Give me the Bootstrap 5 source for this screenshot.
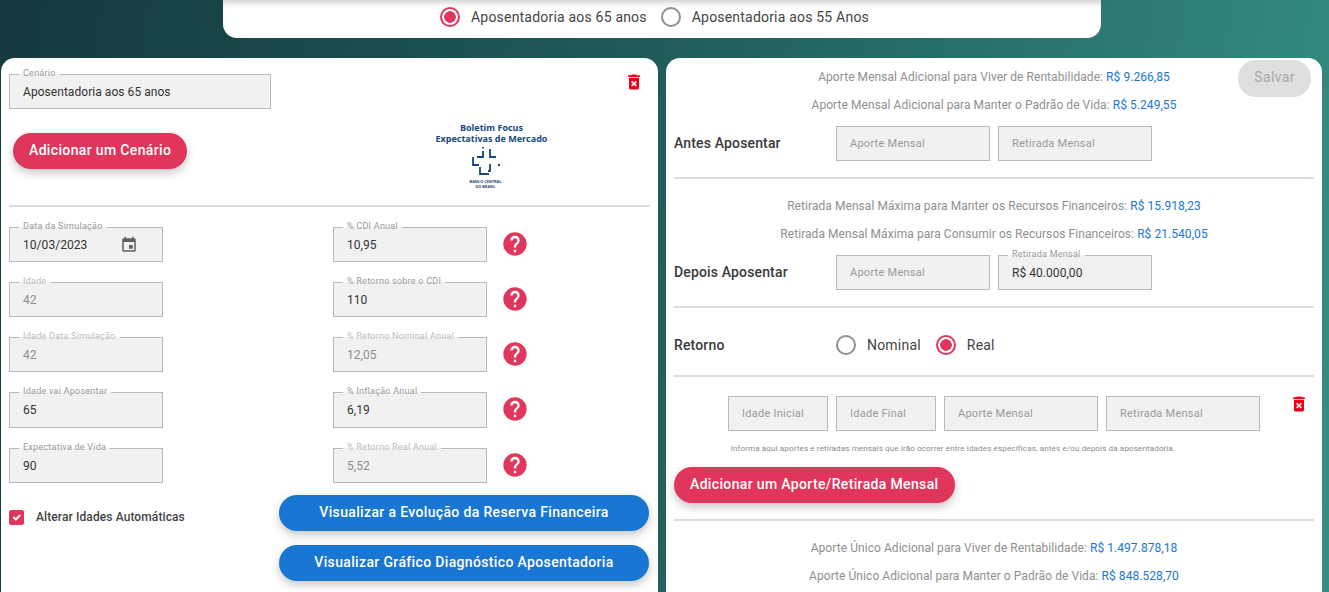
<!DOCTYPE html>
<html lang="pt-br">
<head>
  <meta charset="UTF-8">
  <meta name="viewport" content="width=device-width, initial-scale=1">
  <title>Aposentadoria</title>
  <link href="https://cdn.jsdelivr.net/npm/bootstrap@5.3.3/dist/css/bootstrap.min.css" rel="stylesheet">
  <style>
    html, body { height: 592px; overflow: hidden; }
    body {
      font-family: Roboto, "Liberation Sans", sans-serif;
      font-size: 12px;
      color: #333;
      background: linear-gradient(100deg, #14393e 0%, #1f5a5a 45%, #358f82 100%);
    }
    .faixa-topo {
      width: 878px; height: 38px; margin-left: 223px; padding-bottom: 4px;
      background: #fff;
      border-radius: 0 0 14px 14px;
      box-shadow: inset 0 7px 7px -5px rgba(0,0,0,.22);
    }
    .area-paineis { margin-top: 20px; padding-left: 1px; gap: 8px; }
    .painel {
      width: 657px; height: 560px; flex: none;
      background: #fff;
      border-radius: 14px 14px 0 0;
      position: relative;
    }
    .painel-dir { width: 656px; padding: 10px 8px 0 8px; }
    .painel-esq { padding: 16px 8px 0 8px; }

    .campo {
      position: relative; flex: none;
      width: 154px; height: 35px;
      background: #f1f1f1;
      border: 1px solid #b9b9b9;
      padding-left: 13px;
      display: flex; align-items: center;
      font-size: 12px; letter-spacing: .05px; color: #333;
    }
    .campo.largo { width: 262px; }
    .campo.curto { width: 100px; }
    .campo.alto { height: 36px; }
    .campo.inativo { color: #8d8d8d; }
    .campo.vazio { color: #9a9a9a; font-size: 11px; letter-spacing: .25px; padding-top: 1px; }
    .campo-rotulo {
      position: absolute; top: -7px; left: 9px;
      padding: 0 4px; line-height: 11px;
      font-size: 9px; letter-spacing: .25px; color: #9a9a9a;
      background: linear-gradient(#fff 6px, #f1f1f1 6px);
    }
    .inativo .campo-rotulo { color: #bcbcbc; }
    .icone-data { position: absolute; left: 110px; top: 8px; width: 18px; height: 18px; fill: #5f5f5f; }
    .icone-ajuda { width: 28px; height: 28px; fill: #e0365b; margin: 3px 0 0 14px; flex: none; }
    .icone-lixo { width: 20px; height: 20px; fill: #f00018; flex: none; }

    .botao-pill {
      display: inline-block; height: 36px;
      padding: 0 16px 2px; border: 0; border-radius: 18px;
      font-family: inherit; font-size: 14px; font-weight: 500; letter-spacing: .35px;
      color: #fff; text-align: center;
      box-shadow: 0 4px 10px rgba(0,0,0,.22);
    }
    .botao-rosa { background: #e0365b; }
    .botao-azul { background: #1976d2; width: 370px; display: block; }
    .botao-salvar {
      position: absolute; top: 2px; right: 11px;
      width: 73px; height: 37px; padding: 0 0 2px;
      background: #dfdfdf; color: #a9a9a9; box-shadow: none;
      font-weight: 400;
    }
    .botao-cenario { margin: 24px 0 0 4px; }
    .botao-aporte { display: block; }

    .divisor { height: 2px; background: #dcdcdc; }
    .divisor-esq { margin-bottom: 20px; }
    .div-a, .div-b, .div-c { margin-top: 16px; }

    .topo-cenario { height: 131px; }
    .lixo-cenario { margin: -2px 0 0 76px; }
    .logo-focus {
      width: 113px; margin-left: 164px; margin-top: 48px; text-align: center;
      color: #17477c; font-weight: 700; font-size: 9px; line-height: 11px;
      font-family: "Open Sans", sans-serif; white-space: nowrap;
    }
    .logo-marca { padding-right: 12px; }
    .logo-marca svg { display: block; margin: 2px auto 0; }
    .logo-miudo { font-size: 3.8px; line-height: 5px; margin-top: 2px; color: #26486e; }

    .coluna-esq { width: 324px; flex: none; }
    .linha-campos { height: 55px; }
    .linha-alta { height: 56px; }
    .rodape-esq { margin-top: -8px; }
    .checa-idades { width: 270px; height: 36px; margin-top: 4px; }
    .checa-texto { margin-left: 12px; font-weight: 500; color: #444; letter-spacing: .1px; }
    .botoes-azuis { gap: 14px; }

    .secao-rotulo { width: 154px; flex: none; font-size: 14px; font-weight: 500; letter-spacing: .15px; color: #3a3a3a; }
    .secao-larga { width: 162px; }
    .info { text-align: center; line-height: 18px; color: #8f8f8f; height: 28px; white-space: nowrap; letter-spacing: .06px; }
    .info b { font-weight: 400; color: #1976d2; }
    .info-depois { margin-top: 18px; }
    .info-unico { margin-top: 18px; }
    .linha-aporte { height: 35px; margin-top: 2px; }
    .linha-aporte2 { height: 35px; margin-top: 2px; }
    .linha-retorno { height: 67px; padding-top: 7px; }
    .linha-idades { margin: 19px 0 0 54px; }
    .lixo-idades { margin: -2px 0 0 21px; }
    .nota {
      margin-top: 12px; height: 24px; padding-right: 82px;
      font-size: 8px; color: #8a8a8a; text-align: center; letter-spacing: .15px;
    }

    .form-check-input[type=radio] { width: 20px; height: 20px; margin: 0; border: 2px solid #8e8e96; flex: none; }
    .form-check-input[type=radio]:checked {
      border-color: #e0365b; background-color: #fff;
      background-image: radial-gradient(circle, #e0365b 0, #e0365b 5.5px, transparent 6px);
    }
    .form-check-input[type=checkbox] { width: 15px; height: 15px; margin: 0; border-radius: 2px; flex: none; }
    .form-check-input[type=checkbox]:checked { background-color: #e0365b; border-color: #e0365b; }
    .rotulo-radio { font-size: 14px; letter-spacing: .2px; color: #444; margin-left: 11px; }
    .form-check-input.marca-a[type=radio] { margin-left: 217px; }
    .form-check-input.marca-b[type=radio] { margin-left: 14px; }
    .form-check-input.marca-real[type=radio] { margin-left: 15px; }
  </style>
</head>
<body>

  <div class="faixa-topo d-flex align-items-center">
    <input class="form-check-input marca-a" type="radio" name="idade" checked>
    <span class="rotulo-radio">Aposentadoria aos 65 anos</span>
    <input class="form-check-input marca-b" type="radio" name="idade">
    <span class="rotulo-radio">Aposentadoria aos 55 Anos</span>
  </div>

  <div class="area-paineis d-flex">
    <div class="painel painel-esq">
      <div class="d-flex topo-cenario">
        <div>
          <div class="campo largo"><span class="campo-rotulo">Cenário</span>Aposentadoria aos 65 anos</div>
          <button class="botao-pill botao-rosa botao-cenario">Adicionar um Cenário</button>
        </div>
        <div class="logo-focus">
          Boletim Focus<br>Expectativas de Mercado
          <div class="logo-marca">
            <svg width="30" height="31" viewBox="0 0 30 31" fill="none" stroke="#17477c" stroke-width="1.8">
              <path d="M12 1v1.5M12 5v6H6M19 3v8h6M2 11v8h6M9 21v7h9M19 18v7h-2M27 19h2"/>
            </svg>
            <div class="logo-miudo">BANCO CENTRAL<br>DO BRASIL</div>
          </div>
        </div>
        <svg class="icone-lixo lixo-cenario" viewBox="0 0 24 24"><path d="M6 19c0 1.1.9 2 2 2h8c1.1 0 2-.9 2-2V7H6v12zm2.46-7.12l1.41-1.41L12 12.59l2.12-2.12 1.41 1.41L13.41 14l2.12 2.12-1.41 1.41L12 15.41l-2.12 2.12-1.41-1.41L10.59 14l-2.13-2.12zM15.5 4l-1-1h-5l-1 1H5v2h14V4z"/></svg>
      </div>

      <div class="divisor divisor-esq"></div>

      <div id="camposEsq"></div>

      <div class="d-flex rodape-esq">
        <div class="d-flex align-items-center checa-idades">
          <input class="form-check-input" type="checkbox" checked>
          <span class="checa-texto">Alterar Idades Automáticas</span>
        </div>
        <div class="d-flex flex-column botoes-azuis">
          <button class="botao-pill botao-azul">Visualizar a Evolução da Reserva Financeira</button>
          <button class="botao-pill botao-azul">Visualizar Gráfico Diagnóstico Aposentadoria</button>
        </div>
      </div>
    </div>

    <div class="painel painel-dir">
      <button class="botao-pill botao-salvar">Salvar</button>

      <div class="info">Aporte Mensal Adicional para Viver de Rentabilidade: <b>R$ 9.266,85</b></div>
      <div class="info">Aporte Mensal Adicional para Manter o Padrão de Vida: <b>R$ 5.249,55</b></div>
      <div class="d-flex align-items-center gap-2 linha-aporte">
        <div class="secao-rotulo">Antes Aposentar</div>
        <div class="campo vazio">Aporte Mensal</div>
        <div class="campo vazio">Retirada Mensal</div>
      </div>
      <div class="divisor div-a"></div>

      <div class="info info-depois">Retirada Mensal Máxima para Manter os Recursos Financeiros: <b>R$ 15.918,23</b></div>
      <div class="info">Retirada Mensal Máxima para Consumir os Recursos Financeiros: <b>R$ 21.540,05</b></div>
      <div class="d-flex align-items-center gap-2 linha-aporte2">
        <div class="secao-rotulo">Depois Aposentar</div>
        <div class="campo vazio">Aporte Mensal</div>
        <div class="campo"><span class="campo-rotulo">Retirada Mensal</span>R$ 40.000,00</div>
      </div>
      <div class="divisor div-b"></div>

      <div class="d-flex align-items-center linha-retorno">
        <div class="secao-rotulo secao-larga">Retorno</div>
        <input class="form-check-input" type="radio" name="retorno">
        <span class="rotulo-radio">Nominal</span>
        <input class="form-check-input marca-real" type="radio" name="retorno" checked>
        <span class="rotulo-radio">Real</span>
      </div>
      <div class="divisor"></div>

      <div class="d-flex gap-2 linha-idades">
        <div class="campo vazio curto">Idade Inicial</div>
        <div class="campo vazio curto">Idade Final</div>
        <div class="campo vazio">Aporte Mensal</div>
        <div class="campo vazio">Retirada Mensal</div>
        <svg class="icone-lixo lixo-idades" viewBox="0 0 24 24"><path d="M6 19c0 1.1.9 2 2 2h8c1.1 0 2-.9 2-2V7H6v12zm2.46-7.12l1.41-1.41L12 12.59l2.12-2.12 1.41 1.41L13.41 14l2.12 2.12-1.41 1.41L12 15.41l-2.12 2.12-1.41-1.41L10.59 14l-2.13-2.12zM15.5 4l-1-1h-5l-1 1H5v2h14V4z"/></svg>
      </div>
      <div class="nota">Informa aqui aportes e retiradas mensais que irão ocorrer entre idades específicas, antes e/ou depois da aposentadoria.</div>
      <button class="botao-pill botao-rosa botao-aporte">Adicionar um Aporte/Retirada Mensal</button>
      <div class="divisor div-c"></div>

      <div class="info info-unico">Aporte Único Adicional para Viver de Rentabilidade: <b>R$ 1.497.878,18</b></div>
      <div class="info">Aporte Único Adicional para Manter o Padrão de Vida: <b>R$ 848.528,70</b></div>
    </div>
  </div>

  <script>
    const ajuda = '<svg class="icone-ajuda" viewBox="0 0 24 24"><path d="M12 2C6.48 2 2 6.48 2 12s4.48 10 10 10 10-4.48 10-10S17.52 2 12 2zm1 17h-2v-2h2v2zm2.07-7.75l-.9.92C13.45 12.9 13 13.5 13 15h-2v-.5c0-1.1.45-2.1 1.17-2.83l1.24-1.26c.37-.36.59-.86.59-1.41 0-1.1-.9-2-2-2s-2 .9-2 2H8c0-2.21 1.79-4 4-4s4 1.79 4 4c0 .88-.36 1.68-.93 2.25z"/></svg>';
    const data = '<svg class="icone-data" viewBox="0 0 24 24"><path d="M17 12h-5v5h5v-5zM16 1v2H8V1H6v2H5c-1.11 0-1.99.9-1.99 2L3 19c0 1.1.89 2 2 2h14c1.1 0 2-.9 2-2V5c0-1.1-.9-2-2-2h-1V1h-2zm3 18H5V8h14v11z"/></svg>';
    const linhas = [
      ["Data da Simulação", "10/03/2023", 0, "% CDI Anual", "10,95", 0],
      ["Idade", "42", 1, "% Retorno sobre o CDI", "110", 0],
      ["Idade Data Simulação", "42", 1, "% Retorno Nominal Anual", "12,05", 1],
      ["Idade vai Aposentar", "65", 0, "% Inflação Anual", "6,19", 0],
      ["Expectativa de Vida", "90", 0, "% Retorno Real Anual", "5,52", 1]
    ];
    function campo(rotulo, valor, inativo, alto, extra) {
      return `<div class="campo${inativo ? " inativo" : ""}${alto ? " alto" : ""}"><span class="campo-rotulo">${rotulo}</span>${valor}${extra || ""}</div>`;
    }
    document.getElementById("camposEsq").innerHTML = linhas.map((l, i) =>
      `<div class="d-flex linha-campos${i === 3 ? " linha-alta" : ""}">
        <div class="coluna-esq">${campo(l[0], l[1], l[2], i === 3, i === 0 ? data : "")}</div>
        ${campo(l[3], l[4], l[5], i === 3)}
        ${ajuda}
      </div>`).join("");
  </script>
  <script src="https://cdn.jsdelivr.net/npm/bootstrap@5.3.3/dist/js/bootstrap.bundle.min.js"></script>
</body>
</html>
